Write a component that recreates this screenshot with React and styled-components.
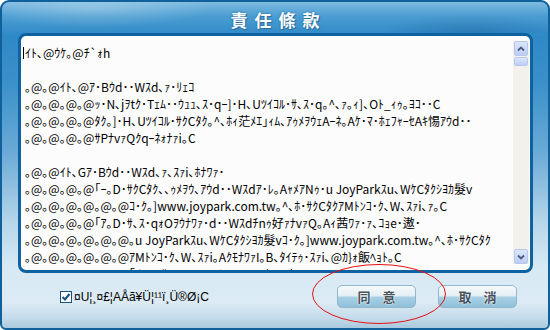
import React from "react";
import styled, { createGlobalStyle } from "styled-components";

const GlobalStyle = createGlobalStyle`
  html, body { margin: 0; padding: 0; }
  body { width: 550px; height: 330px; overflow: hidden; background: #ffffff; }
`;

const Window = styled.div`
  position: relative;
  width: 550px;
  height: 330px;
  box-sizing: border-box;
  border: 2px solid #10609c;
  border-radius: 9px 9px 6px 6px;
  display: flex;
  flex-direction: column;
  overflow: hidden;
  background: linear-gradient(
    to bottom,
    #7fbbe0 0px,
    #4a9dd2 14px,
    #2f89c6 34px,
    #3a90c9 80px,
    #6aaad6 150px,
    #b6d6ea 220px,
    #d7e9f4 265px,
    #dcebf5 300px,
    #c4dbea 316px,
    #a9c9de 326px
  );
`;

const TitleBar = styled.div`
  height: 31px;
  flex-shrink: 0;
  display: flex;
  align-items: center;
  justify-content: center;
  background: radial-gradient(ellipse 120px 20px at 90px 6px, rgba(255, 255, 255, 0.25), transparent),
    radial-gradient(ellipse 90px 18px at 470px 30px, rgba(10, 70, 130, 0.25), transparent);
`;

const Title = styled.h1`
  margin: 4px 0 0 7px;
  font-family: "Noto Sans CJK TC", "Noto Sans CJK SC", sans-serif;
  font-size: 17px;
  font-weight: 700;
  letter-spacing: 7px;
  color: #ffffff;
  text-shadow: 1px 1px 0 #2d6f9e, 0 0 2px #1d5f8e;
`;

const Body = styled.div`
  display: flex;
  padding: 0 15px 0 16px;
`;

const Panel = styled.div`
  flex: 1;
  height: 240px;
  box-sizing: border-box;
  border: 3px solid #0f62a2;
  border-radius: 8px;
  background: #fcfcfc;
  display: flex;
  overflow: hidden;
`;

const TextArea = styled.div`
  flex: 1;
  padding: 8px 0 0 4px;
  overflow: hidden;
  font-family: "Noto Sans CJK JP", sans-serif;
  font-size: 12px;
  line-height: 17px;
  color: #000000;
`;

const Line = styled.div`
  white-space: pre;
  height: 17px;
`;

const Caret = styled.span`
  display: inline-block;
  width: 1px;
  height: 12px;
  margin: 0 1px -1px -2px;
  background: #000000;
`;

const Scrollbar = styled.div`
  width: 16px;
  margin: 5px 1px 6px 0;
  background: #f2f1ec;
  display: flex;
  flex-direction: column;
  align-items: center;
`;

const ScrollButton = styled.div`
  width: 14px;
  height: ${(p) => (p.thumb ? "9px" : "15px")};
  box-sizing: border-box;
  border: 1px solid #b7c8ef;
  border-radius: 2px;
  background: linear-gradient(to bottom, #dce6fb, #bccdf4);
  display: flex;
  align-items: center;
  justify-content: center;
  margin-top: ${(p) => (p.thumb ? "1px" : "0")};
`;

const Track = styled.div`
  flex: 1;
`;

const Footer = styled.div`
  flex: 1;
  display: flex;
  align-items: center;
  padding: 0 31px 8px 58px;
`;

const CheckLabel = styled.label`
  display: flex;
  align-items: center;
  gap: 2px;
  font-family: "Liberation Sans", Arial, sans-serif;
  font-size: 12px;
  color: #000000;
`;

const CheckBox = styled.span`
  width: 12px;
  height: 12px;
  box-sizing: border-box;
  border: 1px solid #1c4f7e;
  background: #ffffff;
  display: flex;
  align-items: center;
  justify-content: center;
`;

const Spacer = styled.div`
  flex: 1;
`;

const Buttons = styled.div`
  display: flex;
  gap: 22px;
`;

const Button = styled.button`
  width: 79px;
  height: 23px;
  padding: 0 0 0 12px;
  border: 1px solid #93b6cb;
  border-radius: 5px;
  background: linear-gradient(
    to bottom,
    #f6fafc 0%,
    #e3eef4 48%,
    #a9d0e4 52%,
    #8fc0da 100%
  );
  font-family: "Noto Sans CJK TC", sans-serif;
  font-size: 13px;
  font-weight: 700;
  letter-spacing: 12px;
  color: #45525c;
  text-shadow: 0 0 2px #ffffff, 0 0 1px #ffffff;
  line-height: 21px;
`;

const Annotation = styled.svg`
  position: absolute;
  left: 309px;
  top: 261px;
  pointer-events: none;
`;

const lines = [
  "ｲﾄ､@ｳｹ｡@ﾁ`ｫh",
  "",
  "｡@｡@ｲﾄ､@ｱ･Bｳd･･Wｽd､ｧ･ﾘｪｺ",
  "｡@｡@｡@｡@ｯ･N､jｦtｸ･Tｪﾑ･･ｳｭｭ､ｽ･qｰ]･H､Uﾂｲｺﾙ･ｻ､ｽ･q｡^､ｧ｡ｨ]､Oﾄ_ｨｩ｡ﾖｺ･･C",
  "｡@｡@｡@｡@ﾀｸ｡]･H､Uﾂｲｺﾙ･ｻｸCﾀｸ｡^､ﾎｨ茫ﾒｴ｣ｨﾑ､ｱｩﾒｦｳｪAｰﾈ｡Aｹ･ﾏ･ﾎｪﾌｬｰｾAｷ惕ｱｳd･･",
  "｡@｡@｡@｡@ｻPﾅvｧQｸqｰﾈｫﾅｧi｡C",
  "",
  "｡@｡@ｲﾄ､Gｱ･Bｳd･･Wｽd､ｧ､ｽｧi､ﾎﾅﾜｧ･",
  "｡@｡@｡@｡@｢ｰ｡D･ｻｸCﾀｸ､､ｩﾒｦｳ､ｱｳd･･Wｽdｱ･ﾚ｡AｬﾒｱNｩ･u JoyParkｽu､WｹCﾀｸｼﾖｶ髮v",
  "｡@｡@｡@｡@｡@｡@ｺ･ｸ｡]www.joypark.com.tw｡^､ﾎ･ｻｸCﾀｸｱMﾄﾝｺ･ｸ､W､ｽｧi､ｧ｡C",
  "｡@｡@｡@｡@｢ｱ｡D･ｻ､ｽ･qｫOｦｳﾅﾜｧ･d･･Wｽdﾁnｩ好ｧﾅvｧQ｡Aｨ茜ﾜｧ･ｧ､ｺｮe･遨･",
  "｡@｡@｡@｡@｡@｡@｡u JoyParkｽu､WｹCﾀｸｼﾖｶ髮vｺ･ｸ｡]www.joypark.com.tw｡^､ﾎ･ｻｸCﾀｸ",
  "｡@｡@｡@｡@｡@｡@ｱMﾄﾝｺ･ｸ､W､ｽｧi｡AｸﾓﾅﾜｧI｡B､ﾀｲﾃｩ･ｽｧi､@ｶ}ｫ飯ﾍｮﾄ｡C",
  "｡@｡@｡@｡@｡@｡@｢ｲ｡D･ｻ､ｽ･q｡@ｩﾒ､ｽ･ｬ､ｧ･ﾎｪﾌｫﾅ､@｡@､ｧ",
];

const Arrow = ({ down }) => (
  <svg width="8" height="6" viewBox="0 0 8 6">
    <path
      d={down ? "M1 1.5 L4 4.5 L7 1.5" : "M1 4.5 L4 1.5 L7 4.5"}
      fill="none"
      stroke="#4b5e82"
      strokeWidth="1.8"
    />
  </svg>
);

const App = () => {
  return (
    <>
      <GlobalStyle />
      <Window>
        <TitleBar>
          <Title>責任條款</Title>
        </TitleBar>
        <Body>
          <Panel>
            <TextArea>
              {lines.map((text, i) => (
                <Line key={i}>
                  {i === 0 && <Caret />}
                  {text}
                </Line>
              ))}
            </TextArea>
            <Scrollbar>
              <ScrollButton>
                <Arrow />
              </ScrollButton>
              <ScrollButton thumb />
              <Track />
              <ScrollButton>
                <Arrow down />
              </ScrollButton>
            </Scrollbar>
          </Panel>
        </Body>
        <Footer>
          <CheckLabel>
            <CheckBox>
              <svg width="10" height="10" viewBox="0 0 10 10">
                <path d="M1.5 5 L4 7.5 L8.5 2" fill="none" stroke="#1b4c86" strokeWidth="2" />
              </svg>
            </CheckBox>
            ¤U¦¸¤£¦AÅã¥Ü¦¹¹ï¸Ü®Ø¡C
          </CheckLabel>
          <Spacer />
          <Buttons>
            <Button>同意</Button>
            <Button>取消</Button>
          </Buttons>
        </Footer>
        <Annotation width="136" height="62" viewBox="0 0 136 62">
          <ellipse cx="68" cy="31" rx="66.5" ry="29.5" fill="none" stroke="#e81010" strokeWidth="1" />
        </Annotation>
      </Window>
    </>
  );
};

export default App;
